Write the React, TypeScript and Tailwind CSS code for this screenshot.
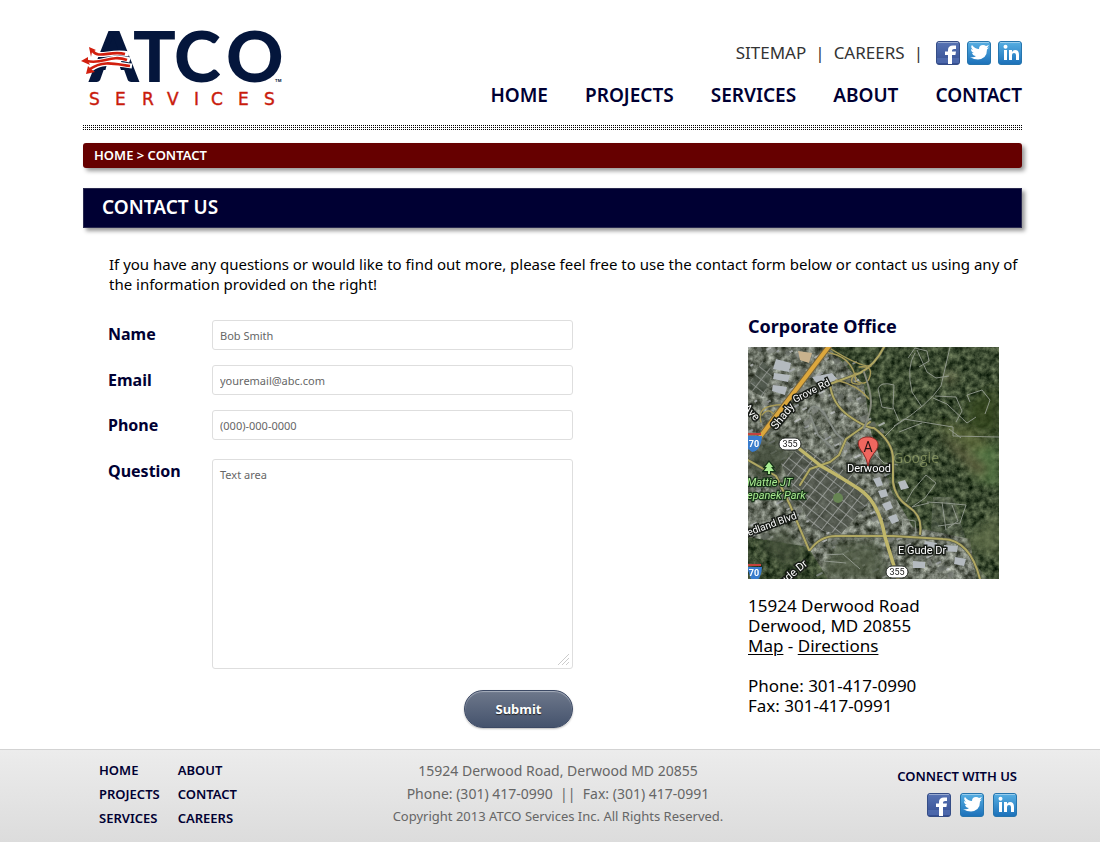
import React from 'react';

const mainNav = ['HOME', 'PROJECTS', 'SERVICES', 'ABOUT', 'CONTACT'];
const footerNav = ['HOME', 'ABOUT', 'PROJECTS', 'CONTACT', 'SERVICES', 'CAREERS'];
const fieldClass =
  'block w-full rounded-[3px] border border-[#dedede] bg-white px-[7px] text-[11px] font-normal text-[#555] placeholder:text-[#666] outline-none';

function Logo() {
  return (
    <svg className="overflow-visible" width="204" height="80" viewBox="80 28 204 80" role="img" aria-label="ATCO Services">
      <g fill="#04163c" fontFamily="Lato, sans-serif" fontWeight="900" fontSize="71">
        <text x="89" y="82">A</text>
        <text x="133" y="82">T</text>
        <text x="174" y="82">C</text>
        <text x="226" y="82">O</text>
      </g>
      <path d="M113 36L104 60H122Z" fill="#04163c" />
      <path d="M102 83L107 64H119L125 83Z" fill="#fff" />
      <g fill="none" stroke="#fff" strokeWidth="5">
        <path d="M92 50C98 60 110 50 129 54" />
        <path d="M88 61C102 65 111 54 130 60" />
        <path d="M91 69C103 60 115 64 132 66" />
      </g>
      <g fill="none" stroke="#d21f0e" strokeWidth="2.600">
        <path d="M92 50C98 60 110 50 125 54" />
        <path d="M87 61C102 65 111 54 127 60" />
        <path d="M90 69C103 60 115 64 130 66" />
      </g>
      <g fill="#d21f0e">
        <path d="M89 47l7 3-4 2-1 5zM81 61l7-4v4l2 4zM86 74l2-8 3 3 4 3z" />
      </g>
      <text x="275" y="82" fontFamily="Inter, sans-serif" fontSize="4" fontWeight="700" fill="#04163c">TM</text>
      <text x="89 115 142 167 194 211 238 264" y="105" fontFamily="DejaVu Sans, sans-serif" fontSize="17" fill="#c91b0c" stroke="#c91b0c" strokeWidth=".4">SERVICES</text>
    </svg>
  );
}

function Social({ kind, id }: { kind: 'Facebook' | 'Twitter' | 'LinkedIn'; id: string }) {
  const fb = kind === 'Facebook';
  return (
    <a href="#" aria-label={kind} className="block">
      <svg width="24" height="24" viewBox="0 0 24 24">
        <defs>
          <linearGradient id={id} x2="0" y2="1">
            <stop stopColor={fb ? '#5874b4' : '#58b0e3'} />
            <stop offset="1" stopColor={fb ? '#344d91' : '#1b70b9'} />
          </linearGradient>
        </defs>
        <rect x=".5" y=".5" width="23" height="23" rx="2.5" fill={`url(#${id})`} stroke={fb ? '#354d86' : '#2675ad'} />
        <path d="M2 1.5h20" stroke="#fff" opacity=".4" />
        {fb && <path d="M1 17h22v5H1z" fill="#5470b4" opacity=".7" />}
        {fb && <path d="M12 23v-9H9v-3.500h3V9q0-4.500 5-4.500h3V8h-2q-2 0-2 1.500v1h4l-.6 3.500H16v9z" fill="#fff" />}
        {kind === 'Twitter' && (
          <path d="M3 16q4 1 6-1-3 0-4-3h2q-3-1-3-4l2 1q-3-3-1-5 3 4 7 4 0-4 4-4 2 0 3 1l3-1-2 3 2-.4-2 2q0 9-9 10-4 0-8-2.600" fill="#fff" />
        )}
        {kind === 'LinkedIn' && (
          <g fill="#fff">
            <circle cx="7.500" cy="5.700" r="2" />
            <path d="M6 9h3v10H6zM11 9h3v2q1-2 3-2 4 0 4 5v5h-3v-5q0-2-2-2t-2 2v5h-3z" />
          </g>
        )}
      </svg>
    </a>
  );
}

function Socials({ place }: { place: string }) {
  return (
    <>
      <Social kind="Facebook" id={`${place}-f`} />
      <Social kind="Twitter" id={`${place}-t`} />
      <Social kind="LinkedIn" id={`${place}-l`} />
    </>
  );
}

function OfficeMap() {
  const label = { fill: '#fff', stroke: '#171b16', strokeWidth: 3, paintOrder: 'stroke', fontFamily: 'Roboto, sans-serif', fontSize: 11 } as const;
  const blocks = Array.from({ length: 170 }, (_, i) => {
    const y = (i * 47) % 232;
    const x = (i * 71) % (y < 70 ? 112 : 140) + (y > 190 ? 60 : 0);
    return { x, y, w: 3 + (i % 6), h: 2 + ((i * 3) % 6), c: ['#a9adb2', '#80857f', '#c9cccf', '#6a7069'][i % 4] };
  });
  return (
    <svg className="block h-auto w-full" viewBox="0 0 251 232" role="img" aria-label="Satellite map of Derwood">
      <defs>
        <filter id="terrain" x="0" y="0" width="100%" height="100%" colorInterpolationFilters="sRGB">
          <feTurbulence type="fractalNoise" baseFrequency=".16" numOctaves="4" seed="8" />
          <feColorMatrix values=".6 0 0 0 -.07  .6 0 0 0 -.01  .5 0 0 0 -.06  0 0 0 0 1" />
        </filter>
        <filter id="urban" x="0" y="0" width="100%" height="100%" colorInterpolationFilters="sRGB">
          <feTurbulence type="fractalNoise" baseFrequency=".15" numOctaves="4" seed="4" />
          <feColorMatrix values="1 0 0 0 -.06  1 0 0 0 -.04  1 0 0 0 -.08  0 0 0 0 .9" />
          <feComposite in2="SourceGraphic" operator="in" />
        </filter>
        <filter id="soft"><feGaussianBlur stdDeviation="5" /></filter>
        <filter id="edge"><feGaussianBlur stdDeviation=".7" /></filter>
        <pattern id="streets" width="9" height="10" patternUnits="userSpaceOnUse" patternTransform="rotate(-52)">
          <path d="M0 0h9M0 0v10" stroke="#b3b6b4" strokeWidth="1.400" fill="none" />
        </pattern>
      </defs>
      <rect width="251" height="232" fill="#35412c" />
      <rect width="251" height="232" filter="url(#terrain)" />
      <path d="M0 0H80L116 38 123 85 144 145 165 180 222 192 228 232H80L60 200 0 190z" fill="#858880" filter="url(#urban)" />
      <path d="M185 150H205L225 215 240 232H180z" fill="#858880" filter="url(#urban)" opacity=".4" />
      <g opacity=".7" filter="url(#edge)">
        {blocks.map((b, i) => (
          <rect key={i} x={b.x} y={b.y} width={b.w} height={b.h} fill={b.c} transform={`rotate(-28 ${b.x} ${b.y})`} />
        ))}
      </g>
      <g fill="#b4babf" filter="url(#edge)">
        <path d="M28 12l15 4-2 9-16-3zM26 26l16 2-2 7-15-3zM25 38l14 2-2 8-13-4zM64 30l20-4 7 8-18 8z" />
        <path d="M125 132l7-2 3 8-6 2zM130 144l8-2 2 7-7 2zM134 157l8-3 3 7-7 3zM140 170l8-3 3 7-7 3zM150 135l7-2 4 8-8 2zM177 194l12 2-1 5-12-2zM196 198l14 1-1 6-14-1zM165 214l12 1v6h-12zM207 210l11 2-2 7-10-2z" />
      </g>
      <path d="M50 4l14 2-3 10-9-3z" fill="#c9b28d" filter="url(#edge)" />
      <g filter="url(#soft)" opacity=".7">
        <path d="M178 75Q210 70 251 102V125L190 78" fill="#68723f" />
        <path d="M217 56L251 39V90L220 82z" fill="#34471f" />
        <path d="M217 108L251 95V140L225 132z" fill="#5b8149" />
        <path d="M187 85L211 98 240 120 232 132z" fill="#706d48" />
        <circle cx="202" cy="31" r="6" fill="#9a9872" />
        <path d="M0 96L28 92 46 110 28 135 0 130z" fill="#3a4530" />
        <path d="M34 180L58 204 40 220 10 200z" fill="#44503a" />
        <path d="M88 196L130 194 140 232H70z" fill="#48543c" />
        <path d="M213 198L251 165V210z" fill="#68744f" />
      </g>
      <path d="M33 117L53 99 104 128 124 151 93 187 65 182 54 160z" fill="#4c5248" opacity=".75" />
      <path d="M33 117L53 99 104 128 124 151 93 187 65 182 54 160z" fill="url(#streets)" opacity=".85" />
      <circle cx="90" cy="151" r="5" fill="#678553" />
      <path d="M0 41L14 14 25 24 15 50z" fill="#454d41" opacity=".7" />
      <path d="M0 41L14 14 25 24 15 50z" fill="url(#streets)" opacity=".7" />
      <g fill="none" stroke="#a0a69d" strokeWidth="1" opacity=".8">
        <path d="M202 0L193 39Q180 58 147 79L135 91M167 6Q158 20 164 45L174 60M169 3L179 25 188 31 201 29M160 11L167 1 179 4 181 14 171 20M187 49L208 50 214 64 208 75M185 51L199 57 219 76 228 70M222 55L219 48 234 43 242 53 237 67M146 79L156 72 205 80 205 89 251 90M151 85L174 76M130 42Q132 34 146 38L145 60 151 74M130 42L134 60 145 62M201 82L213 91" />
        <path d="M158 155L165 143 178 128 188 136 177 151 164 160 181 156M179 155L197 156 218 158 212 176 190 179M194 155L198 183M204 158L210 174 200 181M154 185L155 172 167 174 168 186M125 105L136 116 150 118M75 208L95 207 112 222M76 214L98 216" />
      </g>
      <g fill="none" stroke="#858b84" strokeWidth="2"><path d="M60 66Q65 53 76 66L88 86 102 98M62 68L70 88 86 102" /></g>
      <g fill="none" strokeLinecap="round" strokeLinejoin="round">
        <g stroke="#555843" strokeWidth="3">
          <path d="M136 0Q127 18 112 26L82 37Q84 57 101 69T126 81Q145 95 145 112V135Q147 151 161 160T172 187" />
          <path d="M49 100L73 119Q91 129 111 142T137 190L150 232M52 138L62 122 82 115 91 108 98 92 122 75M62 203Q72 189 88 189H145L195 192Q222 193 232 232M61 203L42 158 28 129 0 113" />
        </g>
        <g stroke="#b0a862" strokeWidth="2">
          <path d="M136 0Q127 18 112 26L82 37Q84 57 101 69T126 81Q145 95 145 112V135Q147 151 161 160T172 187" />
          <path d="M52 138L62 122 82 115 91 108 98 92 122 75M62 203Q72 189 88 189H145L195 192Q222 193 232 232M61 203L42 158 28 129 0 113" />
        </g>
        <g stroke="#a89b58" strokeWidth="1.400">
          <path d="M76 5Q105 8 108 34Q119 40 122 29T111 20M108 26Q97 38 112 37M83 2Q112 20 123 19M88 33Q110 38 121 52M13 75Q9 62 23 59T36 60M20 83Q27 55 38 64M14 68Q22 58 28 72" />
        </g>
        <path d="M49 100L73 119Q91 129 111 142T137 190L150 232" stroke="#c0b76b" strokeWidth="3.500" />
        <path d="M116 25Q123 45 123 55T116 81" stroke="#85897c" strokeWidth="2" />
        <path d="M82 -2L12 90" stroke="#78643a" strokeWidth="6" />
        <path d="M82 -2L12 90" stroke="#dca73d" strokeWidth="4" />
      </g>
      <text x="145" y="116" fill="#b3bf7d" opacity=".5" fontSize="14" fontFamily="Open Sans, sans-serif">Google</text>
      <g {...label}>
        <text transform="translate(28 83) rotate(-51)">Shady</text>
        <text transform="translate(47 56) rotate(-27)" fontSize="10">Grove Rd</text>
        <text transform="translate(-5 61) rotate(48)">Ave</text>
        <text transform="translate(-5 191) rotate(-20)" fontSize="10">Redland Blvd</text>
        <text transform="translate(30 243) rotate(-40)">Gude Dr</text>
        <text x="150" y="207">E Gude Dr</text>
      </g>
      <g fill="#a9eb91" stroke="#173218" strokeWidth="2.500" paintOrder="stroke" fontFamily="Roboto, sans-serif" fontSize="11" fontStyle="italic">
        <text x="-1" y="139">Mattie JT</text><text x="-1" y="152">epanek Park</text>
        <path d="M21 115l-4 5h2l-3 4h4v3h2v-3h4l-3-4h2z" />
      </g>
      <g fontFamily="Roboto, sans-serif" fontSize="9" textAnchor="middle">
        <g fill="#fff" stroke="#252925" strokeWidth="1"><rect x="31" y="91" width="22" height="12" rx="6" /><rect x="138" y="219" width="22" height="12" rx="6" /></g>
        <g fill="#222"><text x="42" y="100">355</text><text x="149" y="228">355</text></g>
        <g fill="#397ccd"><path d="M-1 89H14Q13 104 4 105L-1 101zM-1 220H14Q13 235 4 235z" /></g>
        <path d="M0 87H13M0 218H13" stroke="#c4433d" strokeWidth="2" />
        <g fill="#fff" fontWeight="700"><text x="6" y="100">70</text><text x="6" y="229">70</text></g>
      </g>
      <text x="99" y="125" {...label}>Derwood</text>
      <path d="M120 119Q119 112 115 106C105 94 113 90 120 90s15 6 6 16Q121 112 120 119" fill="#f0675f" stroke="#8e2924" />
      <text x="120" y="105" textAnchor="middle" fontFamily="Roboto, sans-serif" fontSize="14" fill="#271414">A</text>
    </svg>
  );
}

export default function App() {
  return (
    <div className="bg-white font-['Noto_Sans',sans-serif] text-black">
      <div className="mx-auto max-w-[1100px] pr-[78px] pl-[83px]">
        <header className="flex h-[125px] justify-between pt-[28px]">
          <a href="#" className="-ml-[3px] block h-20 shrink-0"><Logo /></a>
          <div className="flex flex-col items-end pt-[13px]">
            <div className="flex h-6 items-center text-[17px] text-[#333]">
              <a href="#">SITEMAP</a><span className="mx-[9px]">|</span><a href="#">CAREERS</a><span className="mx-[9px]">|</span>
              <div className="ml-1 flex gap-[7px]"><Socials place="top" /></div>
            </div>
            <nav className="mt-4 flex gap-[37px] text-[19px] leading-7 font-semibold text-[#000033]">
              {mainNav.map((n) => <a href="#" key={n}>{n}</a>)}
            </nav>
          </div>
        </header>
        <div className="h-[5px] bg-[linear-gradient(90deg,transparent_50%,#fff_50%),linear-gradient(#000_50%,#fff_50%)] bg-[length:2px_2px]" />
        <nav aria-label="Breadcrumb" className="mt-[13px] h-[25px] rounded-[3px] bg-[#660000] px-[11px] text-[13px] leading-[25px] font-semibold text-white shadow-[3px_3px_4px_#999]">
          <a href="#">HOME</a> &gt; <a href="#">CONTACT</a>
        </nav>
        <h1 className="mt-5 h-10 border border-[#29294f] bg-[#000033] px-[18px] text-[19px] leading-[37px] font-semibold text-white shadow-[3px_3px_4px_#999]">CONTACT US</h1>
        <p className="mt-[26px] ml-[26px] text-[15px] leading-5">If you have any questions or would like to find out more, please feel free to use the contact form below or contact us using any of the information provided on the right!</p>
        <main className="mr-[23px] ml-[25px] flex justify-between">
          <form className="w-[465px] pt-[26px]" onSubmit={(e) => e.preventDefault()}>
            <div className="grid grid-cols-[104px_1fr] gap-y-[15px] text-[16px] font-bold text-[#000033]">
              <label htmlFor="name" className="leading-7">Name</label>
              <input id="name" placeholder="Bob Smith" className={`${fieldClass} h-[30px]`} />
              <label htmlFor="email" className="leading-[30px]">Email</label>
              <input id="email" type="email" placeholder="youremail@abc.com" className={`${fieldClass} h-[30px]`} />
              <label htmlFor="phone" className="leading-[30px]">Phone</label>
              <input id="phone" type="tel" placeholder="(000)-000-0000" className={`${fieldClass} h-[30px]`} />
            </div>
            <div className="mt-[19px] grid grid-cols-[104px_1fr] text-[16px] font-bold text-[#000033]">
              <label htmlFor="question">Question</label>
              <div className="relative">
                <textarea id="question" placeholder="Text area" className={`${fieldClass} h-[210px] resize-none py-[7px]`} />
                <svg className="pointer-events-none absolute right-1 bottom-1" width="11" height="11" viewBox="0 0 11 11" fill="none" stroke="#ccc">
                  <path d="M0 11L11 0M4 11L11 4M8 11L11 8" />
                </svg>
              </div>
            </div>
            <button className="mt-[21px] ml-auto block h-[38px] w-[109px] rounded-full border border-[#3c4964] bg-linear-to-b from-[#6e788b] to-[#45536d] pt-[2px] text-[13px] font-bold text-white shadow-[inset_0_1px_1px_#a7aebc,0_1px_2px_#bbb] [text-shadow:0_1px_1px_#222]">Submit</button>
          </form>
          <section className="w-[251px] pt-[18px]">
            <h2 className="mb-[7px] text-[18px] leading-7 font-bold text-[#000033]">Corporate Office</h2>
            <OfficeMap />
            <address className="mt-[17px] text-[17px] leading-5 not-italic">
              15924 Derwood Road<br />Derwood, MD 20855<br />
              <a href="#" className="underline decoration-1 underline-offset-2">Map</a> - <a href="#" className="underline decoration-1 underline-offset-2">Directions</a><br /><br />
              Phone: 301-417-0990<br />Fax: 301-417-0991
            </address>
          </section>
        </main>
      </div>
      <footer className="mt-[21px] border-t border-[#d3d3d3] bg-linear-to-b from-[#ececec] to-[#dcdcdc]">
        <div className="mx-auto grid h-[92px] max-w-[1100px] grid-cols-[1fr_360px_1fr] pr-[83px] pl-[99px]">
          <nav className="grid grid-cols-[max-content_max-content] content-start justify-start gap-x-[18px] pt-2 text-[13px] leading-6 font-semibold text-[#000033]">
            {footerNav.map((n) => <a href="#" key={n}>{n}</a>)}
          </nav>
          <div className="pt-[9px] text-center text-[14px] leading-[23px] text-[#666]">
            <p>15924 Derwood Road, Derwood MD 20855</p>
            <p>Phone: (301) 417-0990 &nbsp;||&nbsp; Fax: (301) 417-0991</p>
            <p className="text-[13px]">Copyright 2013 ATCO Services Inc. All Rights Reserved.</p>
          </div>
          <div className="flex flex-col items-end pt-4 text-[13px] leading-5 font-semibold text-[#000033]">
            CONNECT WITH US
            <div className="mt-[7px] flex gap-[9px]"><Socials place="bottom" /></div>
          </div>
        </div>
      </footer>
    </div>
  );
}
